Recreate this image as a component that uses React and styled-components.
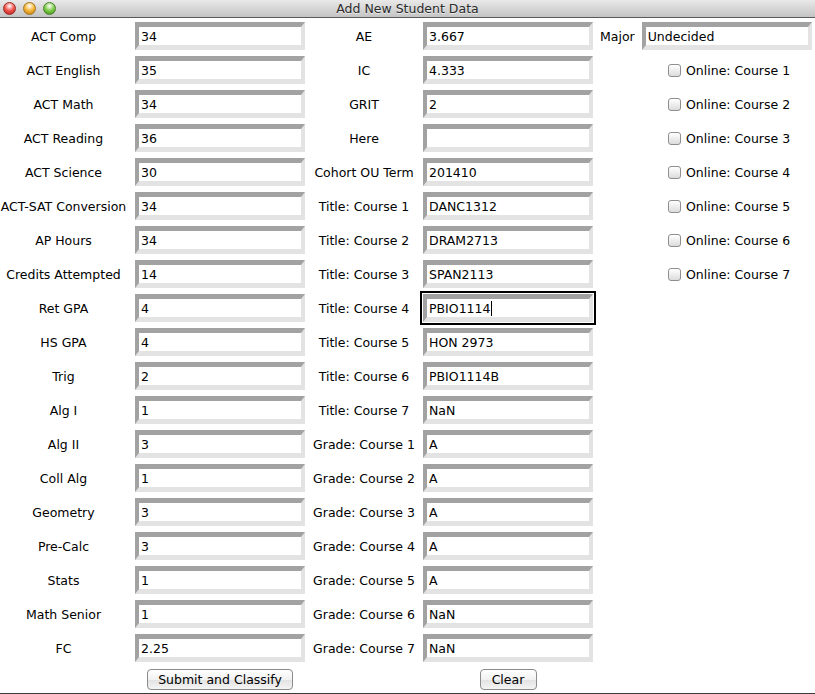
import React from 'react';
import styled, { createGlobalStyle } from 'styled-components';

const GlobalStyle = createGlobalStyle`
  html, body {
    margin: 0;
    padding: 0;
    background: #ffffff;
  }
  body {
    font-family: "DejaVu Sans", "Noto Sans", sans-serif;
  }
`;

const Window = styled.div`
  width: 815px;
  height: 694px;
  box-sizing: border-box;
  border-bottom: 1px solid #3c3c3c;
  background: #ffffff;
  overflow: hidden;
`;

const TitleBar = styled.div`
  position: relative;
  height: 17px;
  border-bottom: 1px solid #5a5a5a;
  background: linear-gradient(#e9e9e9, #c4c4c4);
  display: flex;
  align-items: center;
  justify-content: center;
`;

const Title = styled.div`
  font-size: 12.5px;
  color: #2b2b2b;
  text-shadow: 0 1px 0 rgba(255, 255, 255, 0.6);
`;

const Lights = styled.div`
  position: absolute;
  left: 3px;
  top: 2px;
  display: flex;
  gap: 7px;
`;

const Light = styled.span`
  width: 13px;
  height: 13px;
  border-radius: 50%;
  box-sizing: border-box;
  border: 1px solid ${p => p.$edge};
  background: radial-gradient(circle at 50% 28%, #ffffff 0, ${p => p.$color} 50%, ${p => p.$dark} 100%);
`;

const Form = styled.div`
  display: grid;
  grid-template-columns: 135px 170px 118px 170px 1fr;
  grid-auto-rows: 28px;
  row-gap: 6px;
  padding-top: 4px;
`;

const Label = styled.div`
  display: flex;
  align-items: center;
  justify-content: center;
  padding-right: ${p => (p.$first ? '8px' : '0')};
  font-size: 12.5px;
  color: #000;
  white-space: nowrap;
`;

const Field = styled.div`
  position: relative;
  box-sizing: border-box;
  height: 28px;
  border-style: solid;
  border-width: 5px 4px 5px 4px;
  border-color: #a2a2a2 #e3e3e3 #e3e3e3 #a2a2a2;
  background: #ffffff;
  padding-left: 2px;
  display: flex;
  align-items: center;
  font-size: 12.5px;
  color: #000;
  outline: ${p => (p.$focused ? '2px solid #000' : 'none')};
  outline-offset: 1px;
`;

const Caret = styled.span`
  display: inline-block;
  width: 1px;
  height: 15px;
  background: #000;
  margin-left: 1px;
`;

const SideCell = styled.div`
  display: flex;
  align-items: center;
  padding-left: ${p => (p.$check ? '75px' : '7px')};
  gap: ${p => (p.$check ? '5px' : '7px')};
  font-size: 12.5px;
  white-space: nowrap;
`;

const SideField = styled(Field)`
  width: 170px;
  flex-shrink: 0;
`;

const Check = styled.span`
  width: 13px;
  height: 13px;
  box-sizing: border-box;
  border: 1px solid #8e8e8e;
  border-radius: 3px;
  background: linear-gradient(#ffffff, #dcdcdc);
  box-shadow: inset 0 1px 1px rgba(255, 255, 255, 0.8);
`;

const ButtonCell = styled.div`
  display: flex;
  justify-content: center;
  align-items: flex-start;
  padding-top: 1px;
`;

const Button = styled.button`
  height: 21px;
  width: ${p => p.$width}px;
  box-sizing: border-box;
  border: 1px solid #8b8b8b;
  border-radius: 4px;
  background: linear-gradient(#ffffff 0%, #f1f1f1 50%, #e2e2e2 51%, #f4f4f4 100%);
  font-family: "DejaVu Sans", sans-serif;
  font-size: 12.5px;
  color: #000;
  padding: 0;
`;

const left = [
  ['ACT Comp', '34'],
  ['ACT English', '35'],
  ['ACT Math', '34'],
  ['ACT Reading', '36'],
  ['ACT Science', '30'],
  ['ACT-SAT Conversion', '34'],
  ['AP Hours', '34'],
  ['Credits Attempted', '14'],
  ['Ret GPA', '4'],
  ['HS GPA', '4'],
  ['Trig', '2'],
  ['Alg I', '1'],
  ['Alg II', '3'],
  ['Coll Alg', '1'],
  ['Geometry', '3'],
  ['Pre-Calc', '3'],
  ['Stats', '1'],
  ['Math Senior', '1'],
  ['FC', '2.25'],
];

const middle = [
  ['AE', '3.667'],
  ['IC', '4.333'],
  ['GRIT', '2'],
  ['Here', ''],
  ['Cohort OU Term', '201410'],
  ['Title: Course 1', 'DANC1312'],
  ['Title: Course 2', 'DRAM2713'],
  ['Title: Course 3', 'SPAN2113'],
  ['Title: Course 4', 'PBIO1114'],
  ['Title: Course 5', 'HON 2973'],
  ['Title: Course 6', 'PBIO1114B'],
  ['Title: Course 7', 'NaN'],
  ['Grade: Course 1', 'A'],
  ['Grade: Course 2', 'A'],
  ['Grade: Course 3', 'A'],
  ['Grade: Course 4', 'A'],
  ['Grade: Course 5', 'A'],
  ['Grade: Course 6', 'NaN'],
  ['Grade: Course 7', 'NaN'],
];

const FOCUSED = 8;

const sideCell = i => {
  if (i === 0) {
    return (
      <SideCell>
        Major
        <SideField>Undecided</SideField>
      </SideCell>
    );
  }
  if (i <= 7) {
    return (
      <SideCell $check>
        <Check />
        Online: Course {i}
      </SideCell>
    );
  }
  return <div />;
};

const App = () => {
  return (
    <Window>
      <GlobalStyle />
      <TitleBar>
        <Lights>
          <Light $color="#f0504a" $dark="#a8201a" $edge="#9a2a26" />
          <Light $color="#f5b436" $dark="#b57710" $edge="#a4751e" />
          <Light $color="#7ccb46" $dark="#3f8a1c" $edge="#4a8229" />
        </Lights>
        <Title>Add New Student Data</Title>
      </TitleBar>
      <Form>
        {left.map(([label, value], i) => (
          <React.Fragment key={label}>
            <Label $first>{label}</Label>
            <Field>{value}</Field>
            <Label>{middle[i][0]}</Label>
            <Field $focused={i === FOCUSED}>
              {middle[i][1]}
              {i === FOCUSED && <Caret />}
            </Field>
            {sideCell(i)}
          </React.Fragment>
        ))}
        <div />
        <ButtonCell>
          <Button $width={146}>Submit and Classify</Button>
        </ButtonCell>
        <div />
        <ButtonCell>
          <Button $width={57}>Clear</Button>
        </ButtonCell>
        <div />
      </Form>
    </Window>
  );
};

export default App;
